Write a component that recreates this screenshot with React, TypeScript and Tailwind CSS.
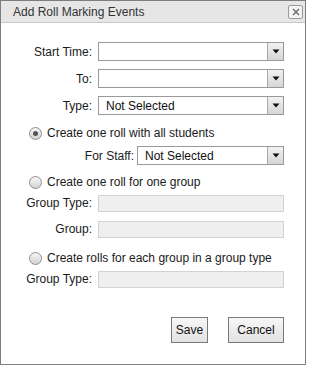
import React from "react";

const font = { fontFamily: '"Liberation Sans", Arial, sans-serif' };

const Arrow = () => (
  <div className="flex h-full w-[16px] items-center justify-center border-l border-[#a8a8a8] bg-gradient-to-b from-[#f2f2f2] to-[#d6d6d6]">
    <svg width="8" height="5" viewBox="0 0 8 5">
      <path d="M0.5 0.5 H7.5 L4 4.5 Z" fill="#111" />
    </svg>
  </div>
);

const Select = ({ value = "", className = "" }: { value?: string; className?: string }) => (
  <div className={`flex h-[19px] items-stretch border border-[#9a9a9a] bg-white ${className}`}>
    <div className="flex flex-1 items-center pl-[7px] text-[12px] text-[#111]">{value}</div>
    <Arrow />
  </div>
);

const Disabled = () => (
  <div className="h-[17px] w-[186px] border border-[#d2d2d2] bg-[#efefef]" />
);

const Radio = ({ checked = false }: { checked?: boolean }) => (
  <div className="flex h-[13px] w-[13px] items-center justify-center rounded-full border border-[#8e8e8e] bg-gradient-to-b from-[#f6f6f6] to-[#d4d4d4]">
    {checked && <div className="h-[5px] w-[5px] rounded-full bg-[#555]" />}
  </div>
);

const Row = ({ label, children, className = "" }: { label: string; children: React.ReactNode; className?: string }) => (
  <div className={`flex items-center ${className}`}>
    <div className="w-[92px] pr-[1px] text-right text-[12px] text-[#1a1a1a]">{label}</div>
    <div className="ml-[5px]">{children}</div>
  </div>
);

export default function App() {
  return (
    <div style={font} className="flex h-[365px] w-[306px] flex-col border border-[#7d7d7d] bg-white">
      {/* title bar */}
      <div className="flex h-[22px] items-center justify-between border-b border-[#c8c8c8] bg-[#e6e6e6] pl-[12px] pr-[2px]">
        <span className="text-[12px] text-[#333]">Add Roll Marking Events</span>
        <div className="flex h-[14px] w-[15px] items-center justify-center rounded-[2px] border border-[#9c9c9c] bg-[#f4f4f4]">
          <svg width="8" height="8" viewBox="0 0 8 8">
            <path d="M1 1 L7 7 M7 1 L1 7" stroke="#6a6a6a" strokeWidth="1.4" />
          </svg>
        </div>
      </div>

      <div className="flex flex-col pr-[21px]">
        <Row label="Start Time:" className="mt-[19px]">
          <Select className="w-[186px]" />
        </Row>
        <Row label="To:" className="mt-[8px]">
          <Select className="w-[186px]" />
        </Row>
        <Row label="Type:" className="mt-[8px]">
          <Select className="w-[186px]" value="Not Selected" />
        </Row>

        <div className="mt-[10px] flex h-[16px] items-center pl-[28px]">
          <Radio checked />
          <span className="ml-[5px] text-[12px] text-[#1a1a1a]">Create one roll with all students</span>
        </div>
        <div className="mt-[5px] flex items-center">
          <div className="w-[133px] text-right text-[12px] text-[#1a1a1a]">For Staff:</div>
          <Select className="ml-[3px] h-[18px] w-[147px]" value="Not Selected" />
        </div>

        <div className="mt-[9px] flex h-[16px] items-center pl-[28px]">
          <Radio />
          <span className="ml-[5px] text-[12px] text-[#1a1a1a]">Create one roll for one group</span>
        </div>
        <Row label="Group Type:" className="mt-[4px]">
          <Disabled />
        </Row>
        <Row label="Group:" className="mt-[8px]">
          <Disabled />
        </Row>

        <div className="mt-[12px] flex h-[16px] items-center pl-[28px]">
          <Radio />
          <span className="ml-[5px] text-[12px] text-[#1a1a1a]">Create rolls for each group in a group type</span>
        </div>
        <Row label="Group Type:" className="mt-[4px]">
          <Disabled />
        </Row>

        <div className="mt-[29px] flex justify-end gap-[20px]">
          <button className="h-[26px] w-[37px] border border-[#7a7a7a] bg-gradient-to-b from-[#f7f7f7] to-[#e2e2e2] text-[12px] text-[#111]">
            Save
          </button>
          <button className="h-[26px] w-[56px] border border-[#7a7a7a] bg-gradient-to-b from-[#f7f7f7] to-[#e2e2e2] text-[12px] text-[#111]">
            Cancel
          </button>
        </div>
      </div>
    </div>
  );
}
